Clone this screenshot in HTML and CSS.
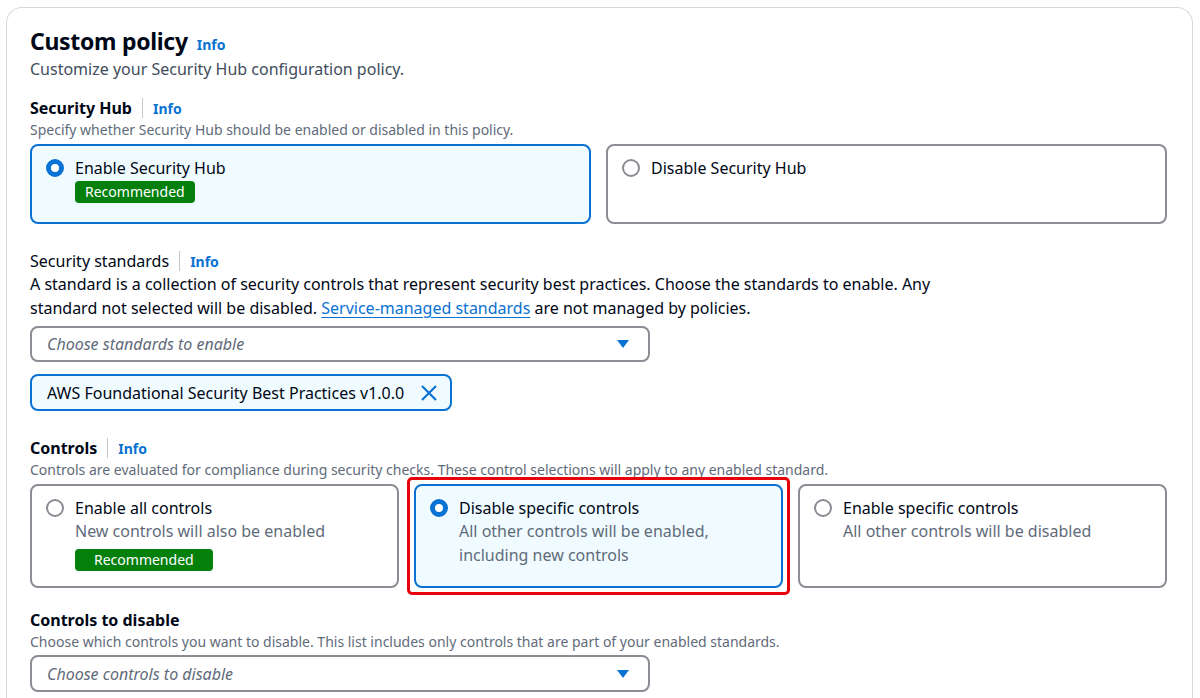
FILE: index.html
```html
<!DOCTYPE html>
<html lang="en">
<head>
<meta charset="utf-8">
<title>Custom policy</title>
<link rel="stylesheet" href="styles.css">
</head>
<body>
<div class="card">
  <div class="header">
    <h1 class="title">Custom policy</h1>
    <a class="info info-title" href="#">Info</a>
  </div>
  <p class="subtitle">Customize your Security Hub configuration policy.</p>

  <section class="field field-hub">
    <div class="label-row">
      <span class="label bold">Security Hub</span>
      <span class="sep"></span>
      <a class="info" href="#">Info</a>
    </div>
    <p class="desc">Specify whether Security Hub should be enabled or disabled in this policy.</p>
    <div class="tiles tiles-2">
      <div class="tile selected">
        <span class="radio on"></span>
        <div class="tile-body">
          <div class="tile-title">Enable Security Hub</div>
          <span class="badge">Recommended</span>
        </div>
      </div>
      <div class="tile">
        <span class="radio"></span>
        <div class="tile-body">
          <div class="tile-title">Disable Security Hub</div>
        </div>
      </div>
    </div>
  </section>

  <section class="field field-std">
    <div class="label-row">
      <span class="label">Security standards</span>
      <span class="sep"></span>
      <a class="info" href="#">Info</a>
    </div>
    <p class="desc-lg">A standard is a collection of security controls that represent security best practices. Choose the standards to enable. Any standard not selected will be disabled. <a class="link" href="#">Service-managed standards</a> are not managed by policies.</p>
    <div class="select">
      <span class="placeholder">Choose standards to enable</span>
      <svg class="caret" width="14" height="10" viewBox="0 0 14 10"><path d="M1 1h12L7 9z" fill="#0972d3"/></svg>
    </div>
    <div class="token">
      <span>AWS Foundational Security Best Practices v1.0.0</span>
      <svg class="xicon" width="18" height="18" viewBox="0 0 18 18"><path d="M2 2l14 14M16 2L2 16" stroke="#0972d3" stroke-width="2.2" fill="none"/></svg>
    </div>
  </section>

  <section class="field field-ctrl">
    <div class="label-row">
      <span class="label bold">Controls</span>
      <span class="sep"></span>
      <a class="info" href="#">Info</a>
    </div>
    <p class="desc">Controls are evaluated for compliance during security checks. These control selections will apply to any enabled standard.</p>
    <div class="tiles tiles-3">
      <div class="tile tall">
        <span class="radio"></span>
        <div class="tile-body">
          <div class="tile-title">Enable all controls</div>
          <div class="tile-desc">New controls will also be enabled</div>
          <span class="badge badge-wide">Recommended</span>
        </div>
      </div>
      <div class="tile tall selected highlight">
        <span class="radio on"></span>
        <div class="tile-body">
          <div class="tile-title">Disable specific controls</div>
          <div class="tile-desc">All other controls will be enabled, including new controls</div>
        </div>
      </div>
      <div class="tile tall">
        <span class="radio"></span>
        <div class="tile-body">
          <div class="tile-title">Enable specific controls</div>
          <div class="tile-desc">All other controls will be disabled</div>
        </div>
      </div>
    </div>
  </section>

  <section class="field field-dis">
    <div class="label-row">
      <span class="label bold">Controls to disable</span>
    </div>
    <p class="desc">Choose which controls you want to disable. This list includes only controls that are part of your enabled standards.</p>
    <div class="select select-dis">
      <span class="placeholder">Choose controls to disable</span>
      <svg class="caret" width="14" height="10" viewBox="0 0 14 10"><path d="M1 1h12L7 9z" fill="#0972d3"/></svg>
    </div>
  </section>
</div>
</body>
</html>
```

FILE: styles.css
```css
* { box-sizing: border-box; }
html, body { margin: 0; padding: 0; background: #fff; overflow: hidden; }
body {
  font-family: "Noto Sans", "Open Sans", sans-serif;
  color: #16191f;
  height: 698px;
}
.card {
  margin: 7px 7px 0 6px;
  border: 1px solid #d5dbdb;
  border-bottom: none;
  border-radius: 16px 16px 0 0;
  padding: 18px 25px 40px 23px;
  height: 720px;
}
.header { display: flex; align-items: baseline; gap: 9px; }
.title { margin: 0; font-size: 23px; line-height: 30px; font-weight: 700; color: #000716; letter-spacing: -0.3px; }
.info { color: #0972d3; font-weight: 700; font-size: 14px; text-decoration: none; }
.subtitle { margin: 2px 0 0; font-size: 16px; line-height: 22px; color: #414d5c; }

.field { margin-top: 17px; }
.label-row { display: flex; align-items: center; height: 22px; }
.label { font-size: 16px; color: #000716; }
.label.bold { font-weight: 700; }
.sep { width: 1px; height: 20px; background: #c6c6cd; margin: 0 10px; }
.desc { margin: 1px 0 0; font-size: 14px; line-height: 20px; color: #5f6b7a; }
.desc-lg { margin: 0; font-size: 16px; line-height: 24px; color: #000716; width: 940px; }
.link { color: #0972d3; text-decoration: underline; text-underline-offset: 3px; }

.tiles { display: grid; gap: 15px; margin-top: 4px; }
.tiles-2 { grid-template-columns: 1fr 1fr; }
.tiles-3 { grid-template-columns: 1fr 1fr 1fr; }
.tile {
  border: 2px solid #8c8c94;
  border-radius: 8px;
  padding: 11px 14px;
  display: flex;
  gap: 11px;
  height: 80px;
  background: #fff;
}
.tile.tall { height: 104px; }
.tile.selected { border-color: #0972d3; background: #f0fbff; }
.tile.highlight { position: relative; }
.tile.highlight::after {
  content: "";
  position: absolute;
  inset: -9px;
  border: 3px solid #e8000b;
  border-radius: 5px;
  pointer-events: none;
}
.radio {
  flex: none;
  width: 18px; height: 18px;
  margin-top: 2px;
  border: 2px solid #8c8c94;
  border-radius: 50%;
  background: #fff;
}
.radio.on { border: 5px solid #0972d3; }
.tile-body { display: flex; flex-direction: column; align-items: flex-start; }
.tile-title { font-size: 16px; line-height: 22px; color: #000716; }
.tile-desc { font-size: 16px; line-height: 24px; color: #5f6b7a; }
.badge {
  background: #037f0c;
  color: #fff;
  font-size: 14px;
  line-height: 22px;
  padding: 0 10px;
  border-radius: 4px;
  margin-top: 2px;
}
.badge-wide { padding: 0 19px; margin-top: 6px; }

.select {
  margin-top: 6px;
  width: 620px;
  height: 36px;
  border: 2px solid #8c8c94;
  border-radius: 8px;
  display: flex;
  align-items: center;
  justify-content: space-between;
  padding: 0 18px 0 15px;
}
.select-dis { margin-top: 3px; height: 37px; }
.placeholder { font-style: italic; color: #5f6b7a; font-size: 16px; }
.token {
  margin-top: 12px;
  display: inline-flex;
  align-items: center;
  gap: 16px;
  height: 37px;
  border: 2px solid #0972d3;
  border-radius: 8px;
  background: #f0fbff;
  padding: 0 12px 0 15px;
  font-size: 16px;
  color: #000716;
}
.field-std { margin-top: 26px; }
.field-ctrl { margin-top: 26px; }
.field-dis { margin-top: 21px; }
```
